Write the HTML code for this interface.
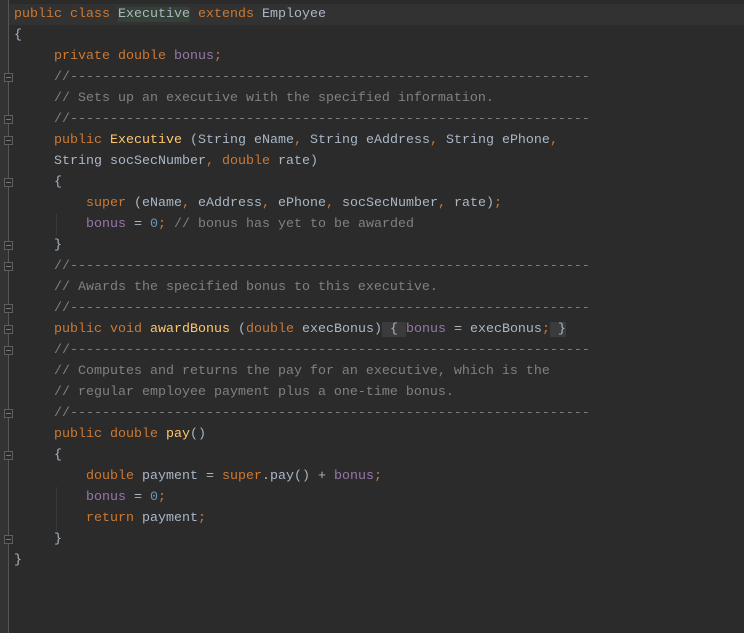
<!DOCTYPE html>
<html><head><style>
body{margin:0;width:744px;height:633px;background:#2b2b2b;overflow:hidden;position:relative;font-family:"Liberation Mono",monospace;font-size:13.33px;}
.strip{position:absolute;left:0;top:0;width:8px;height:633px;background:#313335;}
.gl{position:absolute;left:8px;top:0;width:1px;height:633px;background:#555;}
.hl{position:absolute;left:9px;top:4px;width:735px;height:21px;background:#323232;}
.l{position:absolute;white-space:pre;color:#a9b7c6;line-height:21px;height:21px;}
.k{color:#cc7832}.c{color:#808080}.f{color:#9876aa}.m{color:#ffc66d}.n{color:#6897bb}
.ex{background:#344134}
.fb{background:#3b3b3b}
.ig{position:absolute;width:1px;background:#393939;}
.fm{position:absolute;left:4px;width:9px;height:9px;border:1px solid #5f5f5f;background:#2b2b2b;box-sizing:border-box;}
.fm:after{content:"";position:absolute;left:1px;top:3px;width:5px;height:1px;background:#7a7a7a;}
</style></head><body>
<div class="strip"></div><div class="gl"></div><div class="hl"></div>
<div class="ig" style="left:56px;top:214px;height:22px"></div>
<div class="ig" style="left:56px;top:487px;height:44px"></div>
<div class="fm" style="top:73px"></div>
<div class="fm" style="top:115px"></div>
<div class="fm" style="top:136px"></div>
<div class="fm" style="top:178px"></div>
<div class="fm" style="top:241px"></div>
<div class="fm" style="top:262px"></div>
<div class="fm" style="top:304px"></div>
<div class="fm" style="top:325px"></div>
<div class="fm" style="top:346px"></div>
<div class="fm" style="top:409px"></div>
<div class="fm" style="top:451px"></div>
<div class="fm" style="top:535px"></div>

<div class="l" style="left:14px;top:4px"><span class="k">public class </span><span class="ex">Executive</span><span class="k"> extends </span>Employee</div>
<div class="l" style="left:14px;top:25px">{</div>
<div class="l" style="left:54px;top:46px"><span class="k">private double </span><span class="f">bonus</span><span class="k">;</span></div>
<div class="l c" style="left:54px;top:67px">//-----------------------------------------------------------------</div>
<div class="l c" style="left:54px;top:88px">// Sets up an executive with the specified information.</div>
<div class="l c" style="left:54px;top:109px">//-----------------------------------------------------------------</div>
<div class="l" style="left:54px;top:130px"><span class="k">public </span><span class="m">Executive</span> (String eName<span class="k">, </span>String eAddress<span class="k">, </span>String ePhone<span class="k">,</span></div>
<div class="l" style="left:54px;top:151px">String socSecNumber<span class="k">, double </span>rate)</div>
<div class="l" style="left:54px;top:172px">{</div>
<div class="l" style="left:86px;top:193px"><span class="k">super </span>(eName<span class="k">, </span>eAddress<span class="k">, </span>ePhone<span class="k">, </span>socSecNumber<span class="k">, </span>rate)<span class="k">;</span></div>
<div class="l" style="left:86px;top:214px"><span class="f">bonus</span> = <span class="n">0</span><span class="k">; </span><span class="c">// bonus has yet to be awarded</span></div>
<div class="l" style="left:54px;top:235px">}</div>
<div class="l c" style="left:54px;top:256px">//-----------------------------------------------------------------</div>
<div class="l c" style="left:54px;top:277px">// Awards the specified bonus to this executive.</div>
<div class="l c" style="left:54px;top:298px">//-----------------------------------------------------------------</div>
<div class="l" style="left:54px;top:319px"><span class="k">public void </span><span class="m">awardBonus</span> (<span class="k">double </span>execBonus)<span class="fb"> { </span><span class="f">bonus</span> = execBonus<span class="k">;</span><span class="fb"> }</span></div>
<div class="l c" style="left:54px;top:340px">//-----------------------------------------------------------------</div>
<div class="l c" style="left:54px;top:361px">// Computes and returns the pay for an executive, which is the</div>
<div class="l c" style="left:54px;top:382px">// regular employee payment plus a one-time bonus.</div>
<div class="l c" style="left:54px;top:403px">//-----------------------------------------------------------------</div>
<div class="l" style="left:54px;top:424px"><span class="k">public double </span><span class="m">pay</span>()</div>
<div class="l" style="left:54px;top:445px">{</div>
<div class="l" style="left:86px;top:466px"><span class="k">double </span>payment = <span class="k">super</span>.pay() + <span class="f">bonus</span><span class="k">;</span></div>
<div class="l" style="left:86px;top:487px"><span class="f">bonus</span> = <span class="n">0</span><span class="k">;</span></div>
<div class="l" style="left:86px;top:508px"><span class="k">return </span>payment<span class="k">;</span></div>
<div class="l" style="left:54px;top:529px">}</div>
<div class="l" style="left:14px;top:550px">}</div>
</body></html>
